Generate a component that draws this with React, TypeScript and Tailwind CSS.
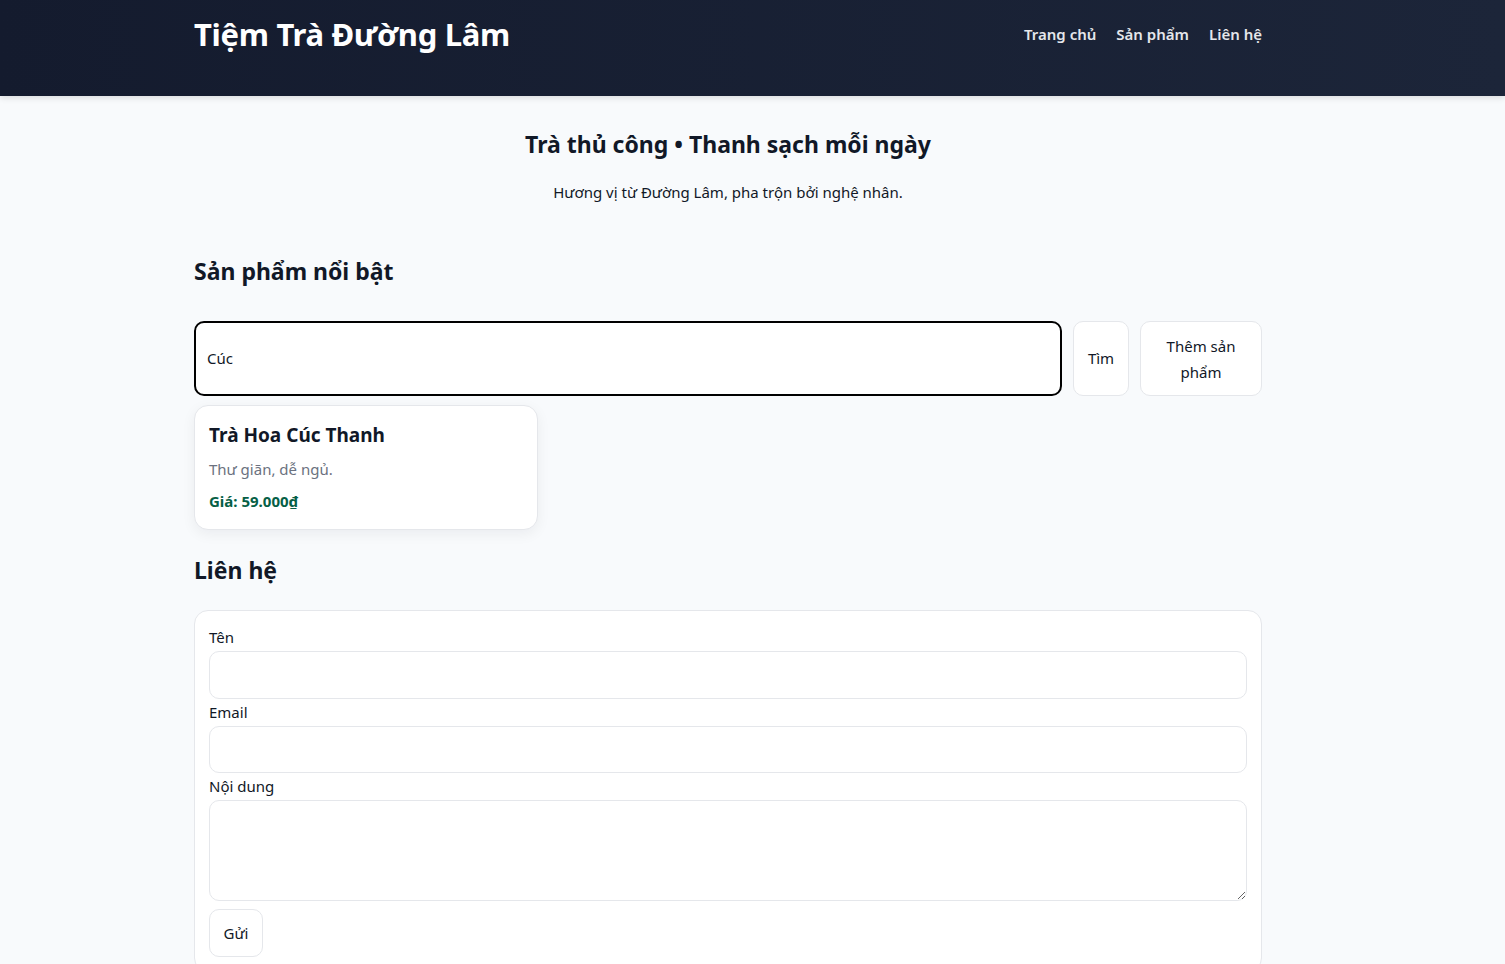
import React from 'react';

const font = { fontFamily: '"Noto Sans", "Open Sans", sans-serif' };

const products = [
    { name: 'Trà Hoa Cúc Thanh', desc: 'Thư giãn, dễ ngủ.', price: '59.000₫' },
];

const Header: React.FC = () => (
    <header className="h-[96px] bg-gradient-to-r from-[#141b2e] to-[#1c2539] shadow-[0_2px_6px_rgba(0,0,0,0.12)] pl-[194px]">
        <div className="w-[1068px] h-[69px] flex justify-between items-center">
            <span className="text-[31px] font-bold text-white tracking-[-0.3px]">Tiệm Trà Đường Lâm</span>
            <nav className="flex gap-5 items-center text-[15px] font-semibold text-[#e5e7eb]">
                <a href="#">Trang chủ</a>
                <a href="#products">Sản phẩm</a>
                <a href="#contact">Liên hệ</a>
            </nav>
        </div>
    </header>
);

export default function App() {
    return (
        <div className="min-h-screen bg-[#f8fafc] text-[#111827]" style={font}>
            <Header />
            <main className="pl-[194px]">
                <div className="w-[1068px]">
                    <section className="text-center pt-[32px]">
                        <h1 className="text-[23px] font-bold leading-[32px]">Trà thủ công • Thanh sạch mỗi ngày</h1>
                        <p className="text-[15px] mt-[21px] leading-[22px]">Hương vị từ Đường Lâm, pha trộn bởi nghệ nhân.</p>
                    </section>

                    <section id="products" className="mt-[52px]">
                        <h2 className="text-[23px] font-bold leading-[32px]">Sản phẩm nổi bật</h2>
                        <div className="flex gap-[11px] mt-[34px] h-[75px]">
                            <input
                                defaultValue="Cúc"
                                className="flex-1 bg-white border-2 border-black rounded-[10px] px-[11px] text-[15px] outline-none"
                            />
                            <button className="w-[56px] bg-white border border-[#e5e7eb] rounded-[10px] text-[15px]">Tìm</button>
                            <button className="w-[122px] bg-white border border-[#e5e7eb] rounded-[10px] text-[15px] leading-[26px] px-[22px]">Thêm sản phẩm</button>
                        </div>
                        <div className="grid grid-cols-3 gap-[18px] mt-[9px]">
                            {products.map(p => (
                                <div key={p.name} className="bg-white border border-[#e5e7eb] rounded-[14px] shadow-[0_4px_14px_rgba(15,23,42,0.06)] px-[14px] pt-[16px] pb-[17px]">
                                    <h3 className="text-[19px] font-bold leading-[26px]">{p.name}</h3>
                                    <p className="text-[15px] text-[#6b7280] mt-[10px] leading-[22px]">{p.desc}</p>
                                    <p className="text-[15px] font-bold text-[#065f46] mt-[10px] leading-[22px]">Giá: {p.price}</p>
                                </div>
                            ))}
                        </div>
                    </section>

                    <section id="contact" className="mt-[24px]">
                        <h2 className="text-[23px] font-bold leading-[32px]">Liên hệ</h2>
                        <form className="mt-[24px] bg-white border border-[#e5e7eb] rounded-[14px] p-[14px] pt-[15px] flex flex-col text-[15px]">
                            <label className="leading-[22px]">Tên</label>
                            <input className="mt-[3px] h-[48px] border border-[#e5e7eb] rounded-[10px] px-3" />
                            <label className="leading-[22px] mt-[2px]">Email</label>
                            <input className="mt-[3px] h-[47px] border border-[#e5e7eb] rounded-[10px] px-3" />
                            <label className="leading-[22px] mt-[2px]">Nội dung</label>
                            <textarea className="mt-[3px] h-[101px] border border-[#e5e7eb] rounded-[10px] px-3 py-2 block" />
                            <button type="button" className="mt-[8px] self-start h-[48px] w-[54px] bg-white border border-[#e5e7eb] rounded-[10px]">Gửi</button>
                        </form>
                    </section>
                </div>
            </main>
        </div>
    );
}
